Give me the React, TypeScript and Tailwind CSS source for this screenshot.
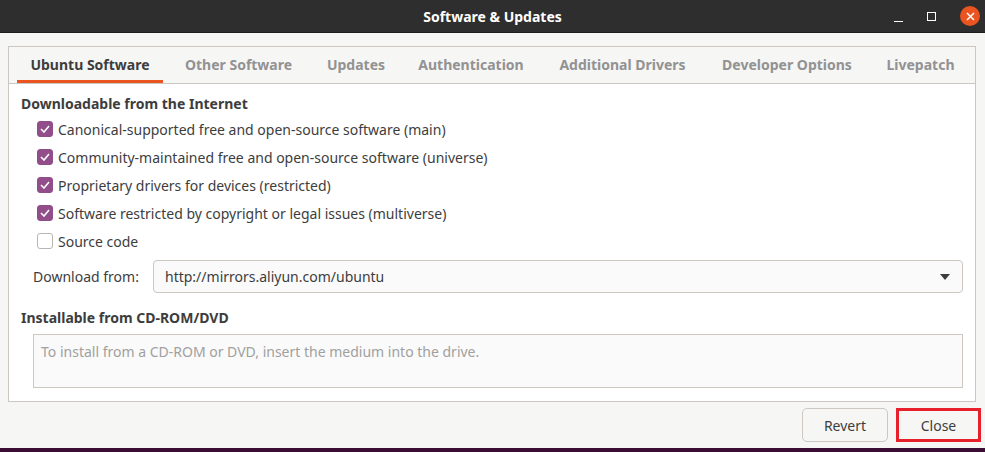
import { useState } from "react";

const tabs = [
  { label: "Ubuntu Software", w: "w-[146px]" },
  { label: "Other Software", w: "w-[151px]" },
  { label: "Updates", w: "w-[84px]" },
  { label: "Authentication", w: "w-[146px]" },
  { label: "Additional Drivers", w: "w-[157px]" },
  { label: "Developer Options", w: "w-[172px]" },
  { label: "Livepatch", w: "w-[95px]" },
];

const sources = [
  { label: "Canonical-supported free and open-source software (main)", on: true },
  { label: "Community-maintained free and open-source software (universe)", on: true },
  { label: "Proprietary drivers for devices (restricted)", on: true },
  { label: "Software restricted by copyright or legal issues (multiverse)", on: true },
  { label: "Source code", on: false },
];

const CheckBox: React.FC<{ checked: boolean; onClick: () => void }> = ({ checked, onClick }) => {
  return (
    <button
      onClick={onClick}
      className={`flex h-[16px] w-[16px] shrink-0 items-center justify-center rounded-[3px] border ${
        checked ? "border-[#924d8b] bg-[#924d8b]" : "border-[#b6b6b3] bg-white"
      }`}
    >
      {checked && (
        <svg width="10" height="8" viewBox="0 0 10 8" fill="none">
          <path d="M1 4l3 3 5-6" stroke="white" strokeWidth="1.6" />
        </svg>
      )}
    </button>
  );
};

export default function App() {
  const [active, setActive] = useState(0);
  const [checks, setChecks] = useState(sources.map((s) => s.on));

  return (
    <div
      className="flex h-[452px] w-[985px] flex-col overflow-hidden bg-[#f6f6f5] text-[14px] text-[#3d3d3d]"
      style={{ fontFamily: "'Noto Sans', 'Liberation Sans', sans-serif" }}
    >
      {/* Title bar */}
      <div className="relative flex h-[33px] shrink-0 items-center justify-center border-b border-[#1d1d1d] bg-[#2f2e2e]">
        <span className="text-[14px] font-bold text-white">Software &amp; Updates</span>
        <div className="absolute right-[5px] top-0 flex h-[32px] items-center gap-[24px]">
          <div className="mt-[10px] h-[1px] w-[9px] bg-white" />
          <div className="h-[9px] w-[9px] border border-white" />
          <div className="flex h-[20px] w-[20px] items-center justify-center rounded-full bg-[#e95420]">
            <svg width="9" height="9" viewBox="0 0 9 9">
              <path d="M1 1l7 7M8 1l-7 7" stroke="white" strokeWidth="1.5" />
            </svg>
          </div>
        </div>
      </div>

      <div className="flex flex-1 flex-col px-[8px] pt-[13px]">
        {/* Notebook */}
        <div className="flex h-[356px] w-[968px] flex-col border border-[#cdc7c2]">
          <div className="flex h-[37px] shrink-0 border-b border-[#cdc7c2] pl-[8px]">
            {tabs.map((t, i) => (
              <button
                key={t.label}
                onClick={() => setActive(i)}
                className={`flex h-full shrink-0 items-center justify-center whitespace-nowrap pt-[1px] font-bold ${t.w} ${
                  active === i
                    ? "border-b-[3px] border-[#e95420] text-[#3d3d3d]"
                    : "border-b-[3px] border-transparent text-[#929292]"
                }`}
              >
                {t.label}
              </button>
            ))}
          </div>

          <div className="flex flex-1 flex-col bg-white px-[12px] pt-[10px]">
            <div className="font-bold leading-[20px]">Downloadable from the Internet</div>
            <div className="mt-[1px] flex flex-col pl-[16px]">
              {sources.map((s, i) => (
                <div key={s.label} className="flex h-[28px] items-center gap-[5px]">
                  <CheckBox
                    checked={checks[i]}
                    onClick={() => setChecks(checks.map((c, j) => (j === i ? !c : c)))}
                  />
                  <span>{s.label}</span>
                </div>
              ))}
            </div>

            <div className="mt-[5px] flex items-center pl-[12px]">
              <span className="w-[120px]">Download from:</span>
              <div className="flex h-[33px] flex-1 items-center justify-between rounded-[4px] border border-[#cdc7c2] bg-[#fafafa] pl-[11px] pr-[12px]">
                <span>http://mirrors.aliyun.com/ubuntu</span>
                <svg width="10" height="6" viewBox="0 0 10 6">
                  <path d="M0 0h10L5 6z" fill="#3d3d3d" />
                </svg>
              </div>
            </div>

            <div className="mt-[15px] font-bold leading-[20px]">Installable from CD-ROM/DVD</div>
            <div className="ml-[12px] mt-[6px] h-[54px] border border-[#cdc7c2] bg-[#fafafa] px-[7px] pt-[6px] text-[#a0a0a0]">
              To install from a CD-ROM or DVD, insert the medium into the drive.
            </div>
          </div>
        </div>

        {/* Buttons */}
        <div className="-mr-[4px] mt-[6px] flex justify-end gap-[8px]">
          <button className="h-[34px] w-[86px] rounded-[5px] border border-[#cdc7c2] bg-[#f6f6f5]">
            Revert
          </button>
          <button className="h-[34px] w-[85px] border-[3px] border-[#e8202b] bg-[#f6f6f5]">
            Close
          </button>
        </div>
      </div>

      <div className="h-[4px] shrink-0 bg-[#3b0d34]" />
    </div>
  );
}
